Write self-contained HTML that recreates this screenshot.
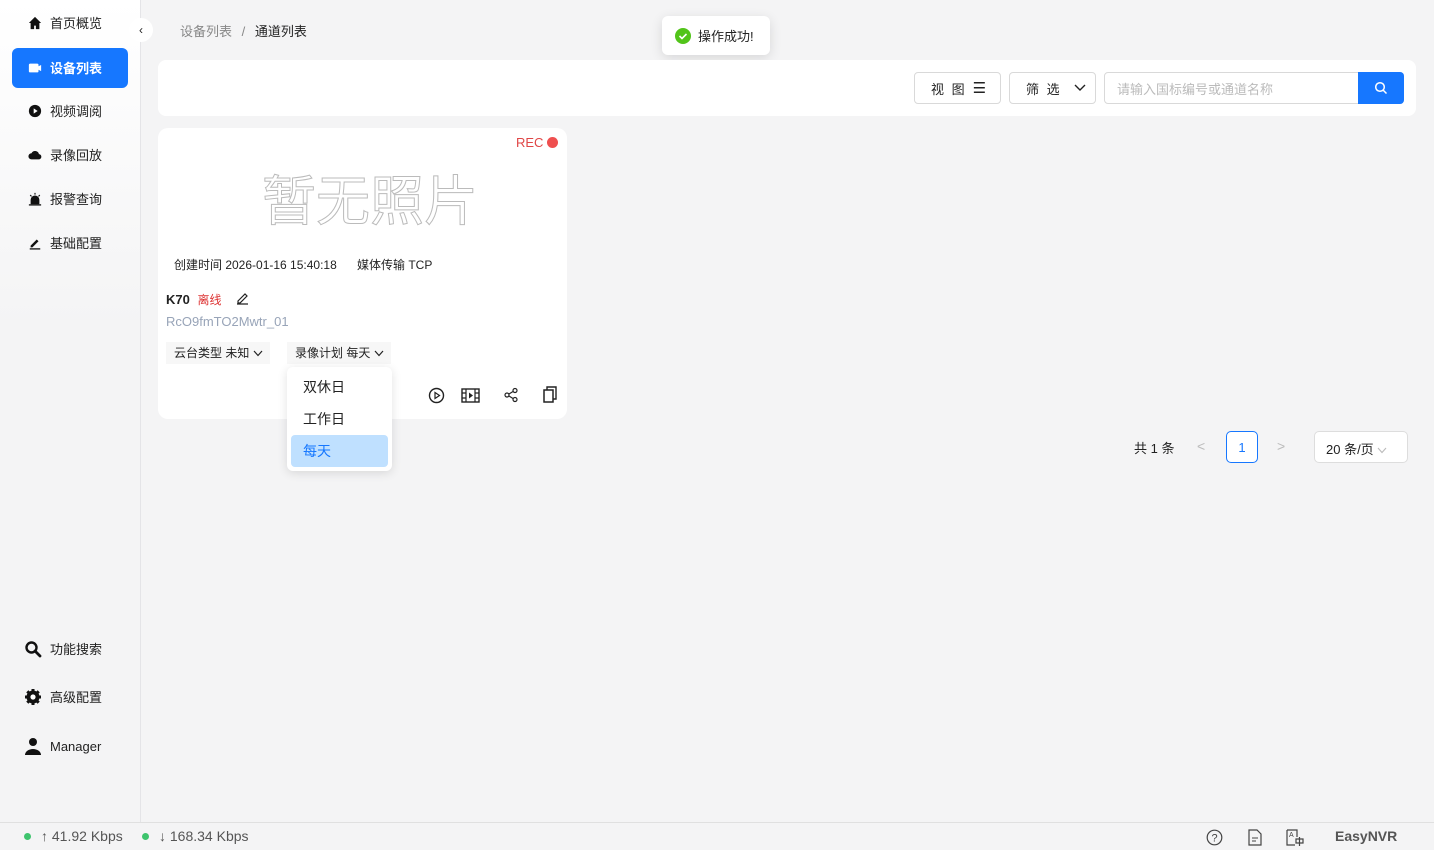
<!DOCTYPE html>
<html><head><meta charset="utf-8"><style>
*{box-sizing:border-box;margin:0;padding:0}
body{width:1434px;height:850px;overflow:hidden;background:#f4f4f5;font-family:"Liberation Sans","Noto Sans CJK SC",sans-serif;color:#222;position:relative;font-size:13px}
.side{position:absolute;left:0;top:0;width:141px;height:822px;border-right:1px solid #e4e4e7;background:linear-gradient(#fff,#f4f4f5 40%)}
.mi{position:absolute;left:12px;width:116px;height:40px;display:flex;align-items:center;padding-left:16px;font-size:13px;color:#222;line-height:1}
.mi svg{width:14px;height:14px;margin-right:8px}
.mi.act{background:#1677ff;color:#fff;border-radius:6px;font-weight:bold}
.mi.b svg{width:18px;height:18px;margin-right:8px}
.mi.b{padding-left:12px}
.collapse{position:absolute;left:129px;top:18px;width:24px;height:24px;border-radius:50%;background:#fff;display:flex;align-items:center;justify-content:center;font-size:12px}
.abs{position:absolute;white-space:nowrap}
.foot{position:absolute;left:0;top:822px;width:1434px;height:28px;border-top:1px solid #e0e0e0;background:#f4f4f5;font-size:14px;color:#555}
.dot{display:inline-block;width:7px;height:7px;border-radius:50%;background:#3ec46d}
.btn{position:absolute;height:32px;border:1px solid #d9d9d9;border-radius:4px;background:#fff;display:flex;align-items:center;font-size:13px;white-space:nowrap}
</style></head><body>
<div class="side">
 <div class="mi" style="top:3px"><svg viewBox="0 0 16 16"><path d="M8 1L1 8h2v7h4v-4h2v4h4V8h2z" fill="#111"/></svg>首页概览</div>
 <div class="mi act" style="top:48px"><svg viewBox="0 0 16 16"><rect x="1" y="3" width="11" height="10" rx="1.5" fill="#fff"/><path d="M12 6l3-1.5v7L12 10z" fill="#fff"/></svg>设备列表</div>
 <div class="mi" style="top:91px"><svg viewBox="0 0 16 16"><circle cx="8" cy="8" r="7" fill="#111"/><path d="M6.5 5v6l4.5-3z" fill="#fff"/></svg>视频调阅</div>
 <div class="mi" style="top:135px"><svg viewBox="0 0 16 16"><path d="M4 13a3.5 3.5 0 010-7 4.5 4.5 0 018.5 1A3 3 0 0112 13z" fill="#111"/></svg>录像回放</div>
 <div class="mi" style="top:179px"><svg viewBox="0 0 16 16"><path d="M3 14V9a5 5 0 0110 0v5z" fill="#111"/><rect x="1" y="14" width="14" height="1.5" fill="#111"/><path d="M8 1v2M2.5 3.5l1.5 1.5M13.5 3.5L12 5" stroke="#111" stroke-width="1.3"/></svg>报警查询</div>
 <div class="mi" style="top:223px"><svg viewBox="0 0 16 16"><path d="M3 11l7-7 2 2-7 7H3z" fill="#111"/><rect x="2" y="14" width="12" height="1.5" fill="#111"/></svg>基础配置</div>
 <div class="mi b" style="top:629px"><svg viewBox="0 0 18 18"><circle cx="7.5" cy="7.5" r="5" fill="none" stroke="#111" stroke-width="2.4"/><path d="M11 11l5 5" stroke="#111" stroke-width="2.8" stroke-linecap="round"/></svg>功能搜索</div>
 <div class="mi b" style="top:677px"><svg viewBox="0 0 18 18"><circle cx="9" cy="9" r="6.5" fill="#111"/><g stroke="#111" stroke-width="3"><path d="M9 1v16M1 9h16M3.3 3.3l11.4 11.4M14.7 3.3L3.3 14.7"/></g><circle cx="9" cy="9" r="2.6" fill="#fff"/></svg>高级配置</div>
 <div class="mi b" style="top:726px"><svg viewBox="0 0 18 18"><circle cx="9" cy="5" r="4" fill="#111"/><path d="M1 18a8 6 0 0116 0z" fill="#111"/></svg>Manager</div>
</div>
<div class="collapse">‹</div>
<div class="abs" style="left:180px;top:21px;font-size:13px;color:#888">设备列表 <span style="margin:0 6px">/</span> <span style="color:#222">通道列表</span></div>
<div class="abs" style="left:662px;top:16px;width:108px;height:39px;background:#fff;border-radius:6px;box-shadow:0 3px 12px rgba(0,0,0,.12);display:flex;align-items:center;padding-left:13px;font-size:13px">
<svg width="16" height="16" viewBox="0 0 16 16" style="margin-right:7px"><circle cx="8" cy="8" r="8" fill="#52c41a"/><path d="M4.5 8l2.5 2.5 4.5-4.5" stroke="#fff" stroke-width="1.6" fill="none"/></svg>操作成功!</div>
<div class="abs" style="left:158px;top:60px;width:1258px;height:56px;background:#fff;border-radius:8px"></div>
<div class="btn" style="left:914px;top:72px;width:87px;padding-left:16px;letter-spacing:2px">视 图 <span style="font-size:15px;margin-left:6px;letter-spacing:0">☰</span></div>
<div class="btn" style="left:1009px;top:72px;width:87px;padding-left:16px;letter-spacing:2px">筛 选 <svg width="12" height="8" viewBox="0 0 12 8" style="margin-left:12px"><path d="M1 1l5 5 5-5" stroke="#222" fill="none" stroke-width="1.4"/></svg></div>
<div class="btn" style="left:1104px;top:72px;width:300px;padding-left:12px;color:#bbb;border-radius:4px">请输入国标编号或通道名称</div>
<div class="abs" style="left:1358px;top:72px;width:46px;height:32px;background:#1677ff;border-radius:0 4px 4px 0;display:flex;align-items:center;justify-content:center"><svg width="14" height="14" viewBox="0 0 14 14"><circle cx="6" cy="6" r="4.3" fill="none" stroke="#fff" stroke-width="1.5"/><path d="M9 9l3.5 3.5" stroke="#fff" stroke-width="1.5"/></svg></div>
<div class="abs" style="left:158px;top:128px;width:409px;height:291px;background:#fff;border-radius:10px"></div>
<div class="abs" style="left:516px;top:135px;color:#e04646;font-size:13px">REC</div>
<div class="abs" style="left:547px;top:137px;width:11px;height:11px;border-radius:50%;background:#ef4f4f"></div>
<div class="abs" style="left:262px;top:170px;font-size:54px;color:#fff;-webkit-text-stroke:1px #bbb;letter-spacing:0;line-height:64px">暂无照片</div>
<div class="abs" style="left:174px;top:256px;font-size:12px">创建时间 2026-01-16 15:40:18</div>
<div class="abs" style="left:357px;top:256px;font-size:12px">媒体传输 TCP</div>
<div class="abs" style="left:166px;top:291px;font-size:13px;font-weight:bold">K70 <span style="color:#d33;font-weight:normal;font-size:12px;margin-left:4px">离线</span></div>
<svg class="abs" style="left:235px;top:291px" width="14" height="14" viewBox="0 0 14 14"><path d="M3 10l7-7 2 2-7 7H3zM2 13h11" stroke="#222" fill="none" stroke-width="1.2"/></svg>
<div class="abs" style="left:166px;top:314px;color:#98a4b8;font-size:13px">RcO9fmTO2Mwtr_01</div>
<div class="abs" style="left:166px;top:342px;width:104px;height:22px;background:#f7f7f7;font-size:12px;padding:4px 8px;line-height:14px">云台类型 未知 <svg width="10" height="7" viewBox="0 0 10 7"><path d="M1 1l4 4.5L9 1" stroke="#222" fill="none" stroke-width="1.2"/></svg></div>
<div class="abs" style="left:287px;top:342px;width:104px;height:22px;background:#f7f7f7;font-size:12px;padding:4px 8px;line-height:14px">录像计划 每天 <svg width="10" height="7" viewBox="0 0 10 7"><path d="M1 1l4 4.5L9 1" stroke="#222" fill="none" stroke-width="1.2"/></svg></div>
<svg class="abs" style="left:428px;top:387px" width="17" height="17" viewBox="0 0 17 17"><circle cx="8.5" cy="8.5" r="7" fill="none" stroke="#222" stroke-width="1.4"/><path d="M7 5.5v6l4.5-3z" fill="none" stroke="#222" stroke-width="1.2"/></svg>
<svg class="abs" style="left:461px;top:388px" width="19" height="15" viewBox="0 0 19 15"><rect x="1" y="1" width="17" height="13" fill="none" stroke="#222" stroke-width="1.4"/><path d="M5 1v13M14 1v13M1 5h4M1 10h4M14 5h4M14 10h4" stroke="#222" stroke-width="1.2"/><path d="M8 4.5v6l4-3z" fill="#222"/></svg>
<svg class="abs" style="left:503px;top:387px" width="16" height="16" viewBox="0 0 16 16"><circle cx="12" cy="3.5" r="2" fill="none" stroke="#222" stroke-width="1.2"/><circle cx="4" cy="8" r="2" fill="none" stroke="#222" stroke-width="1.2"/><circle cx="12" cy="12.5" r="2" fill="none" stroke="#222" stroke-width="1.2"/><path d="M6 7l4-2.5M6 9l4 2.5" stroke="#222" stroke-width="1.2"/></svg>
<svg class="abs" style="left:543px;top:386px" width="14" height="17" viewBox="0 0 14 17"><rect x="1" y="4" width="9" height="12" fill="none" stroke="#222" stroke-width="1.5"/><path d="M4 4V1h9v12h-3" fill="none" stroke="#222" stroke-width="1.4"/></svg>
<div class="abs" style="left:287px;top:367px;width:105px;height:104px;background:#fff;border-radius:6px;box-shadow:0 2px 10px rgba(0,0,0,.12)"></div>
<div class="abs" style="left:303px;top:377px;font-size:14px">双休日</div>
<div class="abs" style="left:303px;top:409px;font-size:14px">工作日</div>
<div class="abs" style="left:291px;top:435px;width:97px;height:32px;background:#bfe0ff;border-radius:4px;color:#1677ff;font-size:14px;padding:6px 12px">每天</div>
<div class="abs" style="left:1134px;top:438px;font-size:13px">共 1 条</div>
<div class="abs" style="left:1197px;top:438px;color:#bbb;font-size:14px">&lt;</div>
<div class="abs" style="left:1226px;top:431px;width:32px;height:32px;border:1px solid #1677ff;border-radius:5px;color:#1677ff;display:flex;align-items:center;justify-content:center;font-size:13px;background:#fff">1</div>
<div class="abs" style="left:1277px;top:438px;color:#bbb;font-size:14px">&gt;</div>
<div class="abs" style="left:1314px;top:431px;width:94px;height:32px;border:1px solid #ddd;border-radius:5px;background:#fff;padding:7px 11px;font-size:13px">20 条/页 <svg width="10" height="7" viewBox="0 0 10 7"><path d="M1 1l4 4.5L9 1" stroke="#bbb" fill="none" stroke-width="1.1"/></svg></div>
<div class="foot">
 <span class="dot abs" style="left:24px;top:10px"></span><span class="abs" style="left:41px;top:5px">↑ 41.92 Kbps</span>
 <span class="dot abs" style="left:142px;top:10px"></span><span class="abs" style="left:159px;top:5px">↓ 168.34 Kbps</span>
 <svg class="abs" style="left:1206px;top:6px" width="17" height="17" viewBox="0 0 17 17"><circle cx="8.5" cy="8.5" r="7.3" fill="none" stroke="#444" stroke-width="1.2"/><text x="8.5" y="12.5" font-size="11" text-anchor="middle" fill="#444" font-family="Liberation Sans">?</text></svg>
 <svg class="abs" style="left:1248px;top:6px" width="14" height="17" viewBox="0 0 14 17"><path d="M1 1h8l4 4v11H1z" fill="none" stroke="#444" stroke-width="1.2"/><path d="M4 9h6M4 12h4" stroke="#444"/></svg>
 <svg class="abs" style="left:1286px;top:6px" width="18" height="17" viewBox="0 0 18 17"><path d="M1 1h10v7M1 1v15h8" fill="none" stroke="#444" stroke-width="1.2"/><text x="3" y="8" font-size="7" fill="#444" font-family="Liberation Sans">A</text><path d="M10 10h7v4h-7zM13.5 8v9" fill="none" stroke="#444" stroke-width="1.2"/></svg>
 <span class="abs" style="left:1335px;top:5px;font-weight:bold;color:#555">EasyNVR</span>
</div>
</body></html>
